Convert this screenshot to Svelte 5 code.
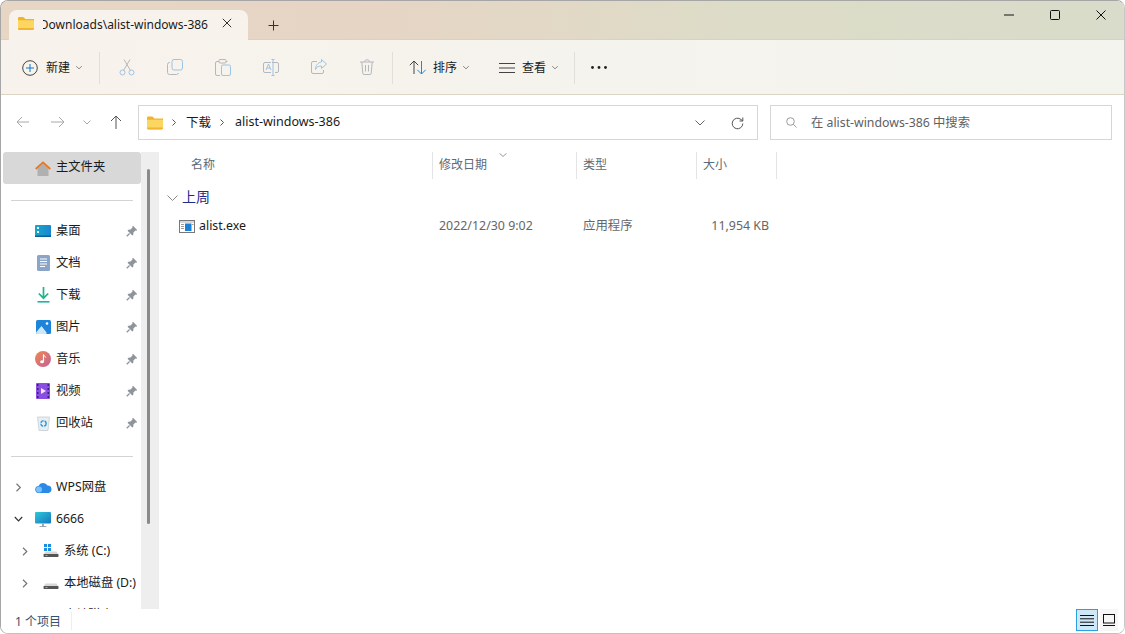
<script>
  const pinned = [
    { k: 'desktop', t: '桌面' }, { k: 'docs', t: '文档' }, { k: 'down', t: '下载' },
    { k: 'pics', t: '图片' }, { k: 'music', t: '音乐' }, { k: 'video', t: '视频' }, { k: 'bin', t: '回收站' }
  ];
</script>

{#snippet chev(cls = '')}
  <svg class="chev {cls}" width="8" height="5" viewBox="0 0 8 5"><path d="M1.200 1.200 4 3.800 6.800 1.200" fill="none" stroke="#8a8a8a" stroke-width="1"/></svg>
{/snippet}

{#snippet folder(w, h)}
  <svg width={w} height={h} viewBox="0 0 16 13">
    <path d="M0 1.400C0 .6.600 0 1.400 0h3.500c.5 0 .9.200 1.200.6L7.200 2H16v2H0z" fill="#f0b429"/>
    <path d="M0 3.200h14.600c.8 0 1.400.6 1.400 1.400v7c0 .8-.6 1.400-1.400 1.400H1.400C.6 13 0 12.400 0 11.600z" fill="#fbd660"/>
    <path d="M0 11.600c0 .8.600 1.400 1.400 1.400h13.200c.8 0 1.400-.6 1.400-1.400V11H0z" fill="#f2b530"/>
  </svg>
{/snippet}

{#snippet pin()}
  <svg class="pin" width="12" height="12" viewBox="0 0 12 12"><path d="M7 .8 11.200 5 10.200 5.800 9.400 5.500 7.400 7.500 7.300 9.700 6.300 10.500 1.500 5.700 2.400 4.700 4.500 4.600 6.500 2.600 6.200 1.800z" fill="#8d949c"/><path d="M3.500 8.500.8 11.200" stroke="#8d949c" stroke-width="1.300"/></svg>
{/snippet}

{#snippet navicon(k)}
  {#if k === 'desktop'}
    <svg width="16" height="12" viewBox="0 0 16 12"><defs><linearGradient id="dk" x1="0" y1="0" x2="1" y2="0"><stop offset="0" stop-color="#17a8c8"/><stop offset="1" stop-color="#1a86d0"/></linearGradient></defs><rect width="16" height="12" rx="1" fill="url(#dk)"/><rect x="2" y="2" width="2" height="2" fill="#e8fbff"/><rect x="2" y="6" width="2" height="2" fill="#e8fbff"/><rect y="10.500" width="16" height="1.500" fill="#0d5f9c"/></svg>
  {:else if k === 'docs'}
    <svg width="13" height="16" viewBox="0 0 13 16"><rect width="13" height="16" rx="1.500" fill="#8ba5c6"/><path d="M3 4h7M3 6.500h7M3 9h7M3 11.500h5" stroke="#fff" stroke-width="1" fill="none"/></svg>
  {:else if k === 'down'}
    <svg width="13" height="16" viewBox="0 0 13 16"><path d="M6.500 0v11M1.800 6.500l4.700 4.700 4.700-4.700" fill="none" stroke="#20b48c" stroke-width="1.700"/><path d="M.500 14.800h12" stroke="#1db5a0" stroke-width="1.600"/></svg>
  {:else if k === 'pics'}
    <svg width="15" height="14" viewBox="0 0 15 14"><rect width="15" height="14" rx="1.500" fill="#1d84dc"/><circle cx="11" cy="3.500" r="1.300" fill="#fff"/><path d="M0 12.500 5.500 6l5 6.500V14H1.500A1.500 1.500 0 0 1 0 12.500z" fill="#cde8fb"/></svg>
  {:else if k === 'music'}
    <svg width="16" height="16" viewBox="0 0 16 16"><defs><linearGradient id="mu" x1="0" y1="0" x2="1" y2="1"><stop offset="0" stop-color="#f0884c"/><stop offset="1" stop-color="#c4609c"/></linearGradient></defs><circle cx="8" cy="8" r="8" fill="url(#mu)"/><path d="M8.500 3.500v7" stroke="#fff" stroke-width="1.200"/><ellipse cx="7" cy="10.800" rx="1.900" ry="1.500" fill="#fff"/><path d="M8.500 3.500c.3 1.500 2 1.500 2.300 3" stroke="#fff" fill="none"/></svg>
  {:else if k === 'video'}
    <svg width="14" height="16" viewBox="0 0 14 16"><rect width="14" height="16" rx="1" fill="#8a4ee0"/><path d="M1 2h1.500M1 6h1.500M1 10h1.500M1 14h1.500M11.500 2H13M11.500 6H13M11.500 10H13M11.500 14H13" stroke="#3c1c80" stroke-width="1.800"/><path d="M5 5l5 3-5 3z" fill="#f0e8ff"/></svg>
  {:else if k === 'bin'}
    <svg width="13" height="15" viewBox="0 0 13 15"><path d="M.5 1h12L11 14.500H2z" fill="#e8eef2" stroke="#c0c8cc" stroke-width=".7"/><circle cx="6.500" cy="7.500" r="2.700" fill="none" stroke="#2a9be0" stroke-width="1.500" stroke-dasharray="3.500 1"/></svg>
  {/if}
{/snippet}

{#snippet drive(win)}
  <svg width="16" height="14" viewBox="0 0 16 14">
    {#if win}<path d="M1 0h3v3H1zM5 0h3v3H5zM1 4h3v3H1zM5 4h3v3H5z" fill="#1c8ee0"/>{/if}
    <path d="M2.500 7.500h11L15.500 10.500H.5z" fill="#d8d8d8"/>
    <rect x=".5" y="10" width="15" height="3" rx=".7" fill="#555"/><rect x="2.500" y="11" width="2" height="1" fill="#5fd08a"/>
  </svg>
{/snippet}

<div class="win">
  <header class="titlebar">
    <div class="tab">
      {@render folder(16, 13)}
      <span class="tabtext"><span>Downloads\alist-windows-386</span></span>
      <svg class="tabx" width="10" height="10" viewBox="0 0 10 10"><path d="M.8.800l8.400 8.400M9.200.800.800 9.200" stroke="#333" stroke-width="1"/></svg>
    </div>
    <svg class="plus" width="11" height="11" viewBox="0 0 11 11"><path d="M5.500.500v10M.5 5.500h10" stroke="#333" stroke-width="1"/></svg>
    <div class="caption">
      <svg width="12" height="12" viewBox="0 0 12 12"><path d="M1 6h10" stroke="#111" stroke-width="1"/></svg>
      <svg width="12" height="12" viewBox="0 0 12 12"><rect x="1.500" y="1.500" width="9" height="9" rx="1" fill="none" stroke="#111" stroke-width="1"/></svg>
      <svg width="12" height="12" viewBox="0 0 12 12"><path d="M1.500 1.500l9 9M10.500 1.500l-9 9" stroke="#111" stroke-width="1"/></svg>
    </div>
  </header>

  <div class="toolbar">
    <button class="cmd new">
      <svg width="16" height="16" viewBox="0 0 16 16"><circle cx="8" cy="8" r="7.300" fill="none" stroke="#444" stroke-width="1"/><path d="M8 4v8M4 8h8" stroke="#0a78d4" stroke-width="1"/></svg>
      <span>新建</span>{@render chev()}
    </button>
    <i class="vsep first"></i>
    <div class="icons">
      <span class="ic"><svg width="16" height="17" viewBox="0 0 16 17"><g fill="none" stroke="#9cc4e4" stroke-width="1"><circle cx="3.500" cy="13.500" r="2.500"/><circle cx="12.500" cy="13.500" r="2.500"/></g><path d="M4.500 11.500 11 .5M11.500 11.500 5 .5" fill="none" stroke="#b4b8bc" stroke-width="1"/></svg></span>
      <span class="ic"><svg width="16" height="16" viewBox="0 0 16 16"><rect x="5" y=".5" width="10.500" height="10.500" rx="2" fill="none" stroke="#9cc4e4"/><path d="M3 3.500H2.500a2 2 0 0 0-2 2v8a2 2 0 0 0 2 2h7a2 2 0 0 0 2-1.500" fill="none" stroke="#b4b8bc"/></svg></span>
      <span class="ic"><svg width="16" height="17" viewBox="0 0 16 17"><path d="M4 2.500H2a1.500 1.500 0 0 0-1.500 1.500v11A1.500 1.500 0 0 0 2 16.500h3M11 2.500h1.500" fill="none" stroke="#b4b8bc"/><rect x="4" y=".5" width="7" height="3.500" rx="1" fill="none" stroke="#b4b8bc"/><rect x="6.500" y="6" width="9" height="10.500" rx="1.500" fill="none" stroke="#9cc4e4"/></svg></span>
      <span class="ic"><svg width="16" height="17" viewBox="0 0 16 17"><path d="M9 3.500h5a1.500 1.500 0 0 1 1.500 1.500v7a1.500 1.500 0 0 1-1.500 1.500H12M8 13.500H2A1.500 1.500 0 0 1 .5 12V5A1.500 1.500 0 0 1 2 3.500h6" fill="none" stroke="#b4b8bc"/><path d="M10 .5v16M8.500.5h3M8.500 16.500h3" stroke="#9cc4e4" fill="none"/><path d="M3 11l2.500-6L8 11M4 9h3" fill="none" stroke="#9cc4e4"/></svg></span>
      <span class="ic"><svg width="16" height="15" viewBox="0 0 16 15"><path d="M6 2.500H2A1.500 1.500 0 0 0 .5 4v9A1.500 1.500 0 0 0 2 14.500h9a1.500 1.500 0 0 0 1.500-1.500v-2" fill="none" stroke="#b4b8bc"/><path d="M10.500.5l5 4.500-5 4.500V7C7.500 7 5.500 8 4.500 10.500 4.500 6.500 7 3.500 10.500 3z" fill="none" stroke="#9cc4e4"/></svg></span>
      <span class="ic"><svg width="14" height="16" viewBox="0 0 14 16"><path d="M0 3h14M4.500 3c0-3 5-3 5 0M1.800 3l1 11.200a1.300 1.300 0 0 0 1.300 1.300h5.800a1.300 1.300 0 0 0 1.300-1.300l1-11.200M5.500 6v6.500M8.500 6v6.500" fill="none" stroke="#b4b8bc"/></svg></span>
    </div>
    <i class="vsep second"></i>
    <button class="cmd sort">
      <svg width="18" height="15" viewBox="0 0 18 15"><path d="M5 14V1M.8 5.200 5 1l4.200 4.200" fill="none" stroke="#444"/><path d="M12.500 1v13M8.300 9.800l4.200 4.200 4.200-4.200" fill="none" stroke="#1a8ae0"/></svg>
      <span>排序</span>{@render chev()}
    </button>
    <button class="cmd view">
      <svg width="16" height="10" viewBox="0 0 16 10"><path d="M0 .5h16M0 5h16M0 9.500h16" stroke="#444"/></svg>
      <span>查看</span>{@render chev()}
    </button>
    <i class="vsep third"></i>
    <svg class="dots" width="16" height="3" viewBox="0 0 16 3"><circle cx="1.500" cy="1.500" r="1.400" fill="#222"/><circle cx="8" cy="1.500" r="1.400" fill="#222"/><circle cx="14.500" cy="1.500" r="1.400" fill="#222"/></svg>
  </div>

  <div class="addr">
    <div class="nav">
      <svg width="13" height="12" viewBox="0 0 13 12"><path d="M13 6H1M6 1 1 6l5 5" fill="none" stroke="#a8a8a8"/></svg>
      <svg width="14" height="12" viewBox="0 0 14 12"><path d="M0 6h13M8 1l5 5-5 5" fill="none" stroke="#a8a8a8"/></svg>
      <svg width="8" height="5" viewBox="0 0 8 5"><path d="M.5.500 4 4 7.500.500" fill="none" stroke="#a8a8a8"/></svg>
      <svg width="12" height="14" viewBox="0 0 12 14"><path d="M6 14V1M1 6l5-5 5 5" fill="none" stroke="#555"/></svg>
    </div>
    <div class="path">
      {@render folder(16, 14)}
      <svg class="crumb first-c" width="4" height="7" viewBox="0 0 4 7"><path d="M.5.500 3.500 3.500.5 6.500" fill="none" stroke="#555" stroke-width="1"/></svg>
      <span>下载</span>
      <svg class="crumb" width="4" height="7" viewBox="0 0 4 7"><path d="M.5.500 3.500 3.500.5 6.500" fill="none" stroke="#555" stroke-width="1"/></svg>
      <span>alist-windows-386</span>
      <svg class="pathchev" width="10" height="6" viewBox="0 0 10 6"><path d="M.5.500 5 5 9.500.500" fill="none" stroke="#666"/></svg>
      <svg class="refresh" width="13" height="13" viewBox="0 0 13 13"><path d="M11.800 6.500A5.300 5.300 0 1 1 10 2.500L11.800 4M11.800.5V4H8.500" fill="none" stroke="#555"/></svg>
    </div>
    <div class="search">
      <svg width="11" height="11" viewBox="0 0 11 11"><circle cx="4.500" cy="4.500" r="3.800" fill="none" stroke="#999"/><path d="M7.300 7.300 10.500 10.500" stroke="#999"/></svg>
      <span>在 alist-windows-386 中搜索</span>
    </div>
  </div>

  <div class="main">
    <aside class="side">
      <div class="tree">
        <div class="home">
          <svg width="16" height="15" viewBox="0 0 16 15"><path d="M2.500 7.500V15h11V7.500L8 2.500z" fill="#b0b0b0"/><path d="M.7 8 8 1.300 15.300 8" fill="none" stroke="#e8761c" stroke-width="1.700"/></svg>
          <span>主文件夹</span>
        </div>
        <hr />
        <div class="pinned">
          {#each pinned as p}
            <div class="row"><span class="ni">{@render navicon(p.k)}</span><span class="lbl">{p.t}</span>{@render pin()}</div>
          {/each}
        </div>
        <hr class="hr2" />
        <div class="row top"><svg class="tw" width="6" height="9" viewBox="0 0 6 9"><path d="M1 .8 4.800 4.500 1 8.200" fill="none" stroke="#777" stroke-width="1.200"/></svg>
          <span class="ni"><svg width="17" height="11" viewBox="0 0 17 11"><path d="M4 11a3.500 3.500 0 0 1-.5-7A5 5 0 0 1 12.500 3.500 3.800 3.800 0 0 1 13.500 11z" fill="#2b8ae8"/><circle cx="4" cy="7.500" r="3" fill="#7cc0f8"/></svg></span>
          <span class="lbl">WPS网盘</span></div>
        <div class="row top"><svg class="tw" width="9" height="6" viewBox="0 0 9 6"><path d="M.8 1 4.500 4.800 8.200 1" fill="none" stroke="#333" stroke-width="1.200"/></svg>
          <span class="ni"><svg width="16" height="15" viewBox="0 0 16 15"><defs><linearGradient id="mon" x1="0" y1="0" x2="1" y2="1"><stop offset="0" stop-color="#30c8d8"/><stop offset="1" stop-color="#1478c0"/></linearGradient></defs><rect width="16" height="11.500" rx="1" fill="url(#mon)"/><path d="M7 11.500h2V14H7zM4.500 14h7v1h-7z" fill="#9aa8b4"/></svg></span>
          <span class="lbl">6666</span></div>
        <div class="row sub"><svg class="tw" width="6" height="9" viewBox="0 0 6 9"><path d="M1 .8 4.800 4.500 1 8.200" fill="none" stroke="#777" stroke-width="1.200"/></svg>
          <span class="ni">{@render drive(true)}</span><span class="lbl">系统 (C:)</span></div>
        <div class="row sub"><svg class="tw" width="6" height="9" viewBox="0 0 6 9"><path d="M1 .8 4.800 4.500 1 8.200" fill="none" stroke="#777" stroke-width="1.200"/></svg>
          <span class="ni">{@render drive(false)}</span><span class="lbl">本地磁盘 (D:)</span></div>
        <div class="row sub"><span class="tw-blank"></span><span class="ni"></span><span class="lbl">本地磁盘 (E:)</span></div>
      </div>
      <div class="track"><i class="thumb"></i></div>
    </aside>

    <section class="list">
      <div class="cols">
        <div class="col c1">名称</div>
        <div class="col c2">修改日期<svg class="sortc" width="8" height="4" viewBox="0 0 8 4"><path d="M.5.300 4 3.500 7.500.300" fill="none" stroke="#999"/></svg></div>
        <div class="col c3">类型</div>
        <div class="col c4">大小</div>
      </div>
      <div class="group">
        <svg width="11" height="6" viewBox="0 0 11 6"><path d="M.5.500 5.500 5.500 10.500.500" fill="none" stroke="#888"/></svg>
        <span>上周</span>
      </div>
      <div class="file">
        <div class="fname">
          <svg width="16" height="13" viewBox="0 0 16 13"><rect x=".5" y=".5" width="15" height="12" fill="#fff" stroke="#777"/><rect x="1" y="1" width="14" height="2" fill="#d4d8dc"/><rect x="6" y="3.500" width="6.500" height="7.500" fill="#1a80d8"/><path d="M2 4.500h3M2 6.500h3M2 8.500h3M13 4.500h1.500" stroke="#999"/></svg>
          <span>alist.exe</span>
        </div>
        <div class="fd">2022/12/30 9:02</div>
        <div class="ft">应用程序</div>
        <div class="fs">11,954 KB</div>
      </div>
    </section>
  </div>

  <footer class="status">
    <span class="count">1 个项目</span>
    <i class="ssep"></i>
    <div class="viewbtns">
      <span class="vb on"><svg width="14" height="11" viewBox="0 0 14 11"><path d="M0 .5h14M0 3.800h14M0 7.200h14M0 10.500h14" stroke="#111"/></svg></span>
      <span class="vb"><svg width="12" height="12" viewBox="0 0 12 12"><rect x=".5" y=".5" width="11" height="8.500" fill="none" stroke="#111"/><path d="M0 11.500h12" stroke="#111"/></svg></span>
    </div>
  </footer>
</div>

<style>
  :global(body) { margin: 0; background: #fff; }
  .win {
    width: 1125px; height: 634px; box-sizing: border-box;
    display: flex; flex-direction: column; overflow: hidden;
    border: 1px solid #a6a6a6; border-right-color: #c8c8c8; border-bottom-color: #c0c0c0; border-radius: 8px;
    background: #fff; color: #1a1a1a;
    font-family: "Noto Sans", "Noto Sans CJK SC", sans-serif; font-size: 12px;
  }
  button { all: unset; }
  svg { display: block; flex: none; }
  i { display: block; }

  .titlebar {
    height: 38px; flex: none; display: flex; align-items: flex-end;
    background: linear-gradient(90deg, #e8d6c5 0%, #e6d5c4 35%, #dddcc8 65%, #d9dcca 100%);
    border-bottom: 1px solid #d6d2c6; padding-left: 8px;
  }
  .tab {
    width: 239px; height: 30px; margin-bottom: -1px; box-sizing: border-box;
    background: #f8f2ec; border-radius: 8px 8px 0 0;
    display: flex; align-items: center; padding: 0 0 4px 9px;
  }
  .tabtext { width: 165px; margin: 3px 0 0 9px; overflow: hidden; display: flex; justify-content: flex-end; white-space: nowrap; font-size: 12px; color: #1a1a1a; }
  .tabx { margin-left: 14px; }
  .plus { margin: 0 0 8px 20px; }
  .caption { margin-left: auto; align-self: flex-start; display: flex; gap: 34px; padding: 8px 17px 0 0; }

  .toolbar {
    height: 55px; flex: none; box-sizing: border-box; display: flex; align-items: center;
    background: linear-gradient(90deg, #f8f2ec 0%, #f5f3ed 50%, #f3f4ee 100%);
    border-bottom: 1px solid #dcd4c4; padding: 1px 0 0 21px;
  }
  .cmd { display: flex; align-items: center; color: #1a1a1a; }
  .cmd span { font-size: 12px; line-height: 16px; }
  .cmd .chev { margin-left: 5px; }
  .new span { margin-left: 8px; }
  .vsep { width: 1px; height: 32px; background: #e2ded8; flex: none; }
  .vsep.first { margin-left: 16px; }
  .icons { display: flex; margin-left: 3px; }
  .ic { width: 48px; display: flex; justify-content: center; }
  .vsep.second { margin-left: 1px; }
  .sort { margin-left: 16px; }
  .sort span { margin-left: 6px; }
  .view { margin-left: 29px; }
  .view span { margin-left: 7px; }
  .vsep.third { margin-left: 15px; }
  .dots { margin-left: 16px; }

  .addr { height: 57px; flex: none; display: flex; align-items: flex-start; box-sizing: border-box; padding-top: 10px; }
  .nav { width: 137px; height: 34px; display: flex; align-items: center; box-sizing: border-box; padding-left: 15px; }
  .nav svg:nth-child(2) { margin-left: 22px; }
  .nav svg:nth-child(3) { margin-left: 18px; }
  .nav svg:nth-child(4) { margin-left: 19px; }
  .path {
    width: 620px; height: 35px; box-sizing: border-box; border: 1px solid #d6d6d6;
    display: flex; align-items: center; padding-left: 8px; font-size: 12.500px; color: #1a1a1a;
  }
  .path span { margin-top: -2px; }
  .crumb { margin: 0 11px 0 9px; }
  .crumb.first-c { margin-left: 9px; margin-right: 10px; }
  .pathchev { margin-left: auto; }
  .refresh { margin: 2px 13px 0 26px; }
  .search {
    width: 342px; height: 35px; margin-left: 12px; box-sizing: border-box; border: 1px solid #d6d6d6;
    display: flex; align-items: center; padding-left: 15px; color: #606060; font-size: 12.300px;
  }
  .search span { margin: -2px 0 0 14px; }

  .main { flex: 1; min-height: 0; display: flex; overflow: hidden; }
  .side { width: 158px; flex: none; display: flex; box-sizing: border-box; border-right: 1px solid #ececec; }
  .tree { flex: none; font-size: 12.300px; padding-left: 2px; box-sizing: content-box; width: 138px; }
  .home {
    height: 32px; background: #d8d8d8; border-radius: 3px;
    display: flex; align-items: center; padding-left: 32px; box-sizing: border-box;
  }
  .home span { margin: -5px 0 0 5px; }
  hr { border: 0; height: 1px; background: #d4d4d4; margin: 16px 8px 0 8px; }
  hr.hr2 { margin-top: 17px; margin-bottom: 14px; }
  .pinned { margin-top: 14px; }
  .row { height: 32px; display: flex; align-items: center; position: relative; padding-left: 30px; }
  .ni { width: 20px; display: flex; justify-content: center; flex: none; }
  .lbl { margin: -2px 0 0 3px; white-space: nowrap; }
  .pin { margin-left: auto; margin-right: 3px; }
  .row.top { padding-left: 11px; }
  .row.top .tw { width: 9px; margin-right: 10px; }
  .row.sub { padding-left: 19px; }
  .row.sub .tw { margin-right: 15px; }
  .row.sub .ni { width: 16px; }
  .row.sub .lbl { margin-left: 5px; }
  .tw-blank { width: 6px; margin-right: 15px; }

  .track { width: 17px; flex: none; background: #eeeeee; box-sizing: border-box; }
  .thumb { width: 3px; height: 355px; margin: 17px 0 0 6px; background: #8a8a8a; border-radius: 2px; }

  .list { flex: 1; min-width: 0; }
  .cols { display: flex; height: 28px; color: #5d6a78; font-size: 12px; }
  .col { height: 27px; box-sizing: border-box; border-right: 1px solid #e4e4e4; display: flex; align-items: center; padding: 0 0 3px 6px; position: relative; }
  .c1 { width: 274px; padding-left: 32px; }
  .c2 { width: 144px; }
  .c3 { width: 120px; }
  .c4 { width: 80px; }
  .sortc { position: absolute; left: 66px; top: 1px; }
  .group { display: flex; align-items: center; height: 26px; margin-top: 5px; padding-left: 8px; color: #1c2b8f; font-size: 14px; }
  .group span { margin: -4px 0 0 4px; }
  .file { display: flex; align-items: center; height: 32px; margin-top: -1px; color: #666; font-size: 12.400px; }
  .fname { width: 280px; box-sizing: border-box; padding-left: 20px; display: flex; align-items: center; color: #1a1a1a; }
  .fname span { margin: -2px 0 0 4px; }
  .fd, .ft, .fs { margin-top: -2px; }
  .fd { width: 144px; box-sizing: border-box; }
  .ft { width: 120px; }
  .fs { width: 66px; text-align: right; }

  .status { height: 24px; flex: none; display: flex; align-items: center; background: #fff; padding-left: 14px; color: #36506e; font-size: 12px; position: relative; }
  .ssep { width: 1px; height: 18px; background: #eeeeee; margin-left: 10px; }
  .viewbtns { margin-left: auto; display: flex; gap: 2px; margin-right: 6px; align-self: stretch; }
  .vb { width: 18px; height: 22px; display: flex; align-items: center; justify-content: center; background: #f6f6f6; }
  .vb.on { width: 22px; box-sizing: border-box; background: #cfe8f8; border: 1px solid #2aa0e0; }
</style>
